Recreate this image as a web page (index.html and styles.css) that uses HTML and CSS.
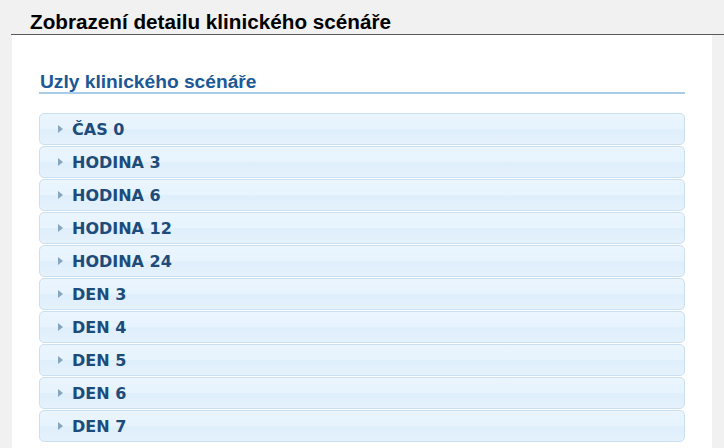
FILE: index.html
```html
<!DOCTYPE html>
<html lang="cs">
<head>
<meta charset="utf-8">
<link rel="stylesheet" href="styles.css">
</head>
<body>
<div class="page">
  <h1 class="title">Zobrazení detailu klinického scénáře</h1>
  <div class="panel">
    <h2 class="section">Uzly klinického scénáře</h2>
    <ul class="nodes">
      <li class="node"><span class="arrow"></span>ČAS 0</li>
      <li class="node"><span class="arrow"></span>HODINA 3</li>
      <li class="node"><span class="arrow"></span>HODINA 6</li>
      <li class="node"><span class="arrow"></span>HODINA 12</li>
      <li class="node"><span class="arrow"></span>HODINA 24</li>
      <li class="node"><span class="arrow"></span>DEN 3</li>
      <li class="node"><span class="arrow"></span>DEN 4</li>
      <li class="node"><span class="arrow"></span>DEN 5</li>
      <li class="node"><span class="arrow"></span>DEN 6</li>
      <li class="node"><span class="arrow"></span>DEN 7</li>
    </ul>
  </div>
</div>
</body>
</html>
```

FILE: styles.css
```css
html, body {
  margin: 0;
  padding: 0;
  background: #f1f1f1;
  height: 100%;
  overflow: hidden;
}
.page {
  padding-left: 11px;
  height: 100%;
  display: flex;
  flex-direction: column;
}
.title {
  margin: 0;
  padding: 10px 0 0 19px;
  height: 24px;
  font-family: "Liberation Sans", Arial, sans-serif;
  font-weight: bold;
  font-size: 20.7px;
  line-height: 24px;
  color: #000;
  border-bottom: 1px solid #5a5a5a;
  white-space: nowrap;
}
.panel {
  flex: 1;
  min-height: 0;
  overflow: hidden;
  background: #fff;
  margin-right: 12px;
  margin-left: 1px;
  padding: 35px 27px 0 27px;
}
.section {
  margin: 0;
  font-family: "Liberation Sans", Arial, sans-serif;
  font-weight: bold;
  font-size: 19.2px;
  line-height: 24px;
  color: #1b5896;
  padding-left: 1px;
  border-bottom: 2px solid #a9cde9;
  height: 22px;
  overflow: visible;
}
.nodes {
  list-style: none;
  margin: 19px 0 0 0;
  padding: 0;
  display: flex;
  flex-direction: column;
  gap: 1px;
}
.node {
  height: 30px;
  flex: none;
  display: flex;
  align-items: center;
  border: 1px solid #cadff0;
  border-radius: 5px;
  background: linear-gradient(#eaf5fe 0%, #e7f3fd 50%, #deeefb 52%, #e5f2fd 100%);
  font-family: "DejaVu Sans", Verdana, sans-serif;
  font-weight: bold;
  font-size: 16px;
  color: #1d4b7a;
  padding-left: 18px;
}
.arrow {
  width: 0;
  height: 0;
  border-top: 4.5px solid transparent;
  border-bottom: 4.5px solid transparent;
  border-left: 5px solid #86a6bf;
  margin-right: 9px;
}
```
